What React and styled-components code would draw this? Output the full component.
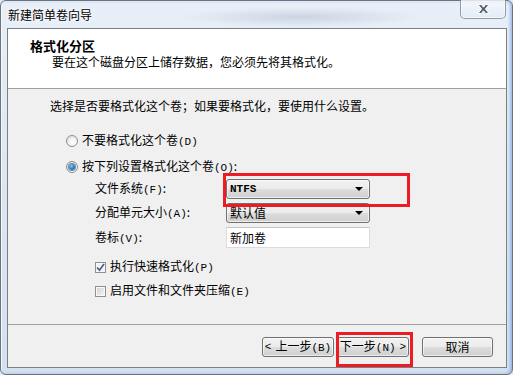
import React from "react";
import styled, { createGlobalStyle } from "styled-components";

const GlobalStyle = createGlobalStyle`
  html, body {
    margin: 0;
    padding: 0;
  }
  body {
    background: #dfe8f2;
    font-family: "Noto Sans CJK SC", "Liberation Sans", sans-serif;
    font-size: 12px;
    color: #000;
  }
`;

// Frame
const Window = styled.div`
  position: relative;
  box-sizing: border-box;
  width: 513px;
  height: 375px;
  padding: 0 5px 6px 6px;
  display: flex;
  flex-direction: column;
  border: 1px solid #6a737e;
  border-radius: 6px;
  background:
    radial-gradient(ellipse 120px 10px at 300px 16px, rgba(150, 165, 185, 0.35), transparent),
    radial-gradient(ellipse 90px 9px at 420px 40px, rgba(150, 165, 185, 0.25), transparent),
    linear-gradient(180deg, #e8eff8 0%, #dde7f2 45%, #d3e0ee 100%);
  box-shadow: inset -2px 0 3px rgba(70, 130, 220, 0.45), inset 1px 1px 0 rgba(255, 255, 255, 0.8);
`;

const TitleBar = styled.div`
  height: 27px;
  display: flex;
  justify-content: space-between;
  align-items: flex-start;
`;

const Caption = styled.div`
  margin: 6px 0 0 1px;
  line-height: 16px;
  text-shadow: 0 0 6px #fff, 0 0 3px #fff;
`;

const CloseButton = styled.div`
  box-sizing: border-box;
  width: 46px;
  height: 19px;
  margin: -1px 1px 0 0;
  display: flex;
  align-items: center;
  justify-content: center;
  border: 1px solid rgba(70, 80, 100, 0.55);
  border-top: none;
  border-radius: 0 0 5px 5px;
  background: linear-gradient(180deg, rgba(255, 255, 255, 0.55), rgba(220, 232, 245, 0.4));
  box-shadow: inset 0 0 0 1px rgba(255, 255, 255, 0.5);
`;

const Client = styled.div`
  flex: 1;
  display: flex;
  flex-direction: column;
  border: 1px solid #7c7f84;
  background: #f0f0f0;
`;

// Header
const Header = styled.div`
  flex: none;
  height: 60px;
  box-sizing: border-box;
  padding: 9px 0 0 22px;
  background: #fff;
  border-bottom: 1px solid #a0a0a0;
`;

const HeaderTitle = styled.div`
  font-size: 13px;
  font-weight: bold;
  line-height: 16px;
`;

const HeaderText = styled.div`
  padding-left: 22px;
  line-height: 16px;
`;

// Body
const Body = styled.div`
  height: 235px;
  flex: none;
  padding: 9px 0 0 42px;
  box-sizing: border-box;
  display: flex;
  flex-direction: column;
`;

const Line = styled.div`
  line-height: 16px;
  white-space: nowrap;
`;

const Key = styled.span`
  font-family: "Liberation Mono", "DejaVu Sans Mono", monospace;
  font-size: 11px;
`;

const OptionRow = styled.div`
  display: flex;
  align-items: center;
  gap: ${(p) => p.$gap || 4}px;
  height: 16px;
  line-height: 16px;
  margin-top: ${(p) => p.$top}px;
  margin-left: ${(p) => p.$indent}px;
  white-space: nowrap;
`;

const Radio = styled.span`
  box-sizing: border-box;
  width: 12px;
  height: 12px;
  border-radius: 50%;
  border: 1px solid #8e8f8f;
  background: radial-gradient(circle at 60% 65%, #ffffff 0%, #f4f4f4 40%, #d4d4d4 100%);
  display: flex;
  align-items: center;
  justify-content: center;
  &::after {
    content: "";
    display: ${(p) => (p.$checked ? "block" : "none")};
    width: 6px;
    height: 6px;
    border-radius: 50%;
    background: radial-gradient(circle at 40% 35%, #8fd1f3 0%, #2a8ad4 45%, #0e4f88 100%);
    box-shadow: 0 0 0 1px rgba(30, 70, 110, 0.6);
  }
`;

const Box = styled.span`
  box-sizing: border-box;
  width: 11px;
  height: 11px;
  border: 1px solid #8e8f8f;
  background: ${(p) =>
    p.$checked
      ? "#f4f4f4"
      : "linear-gradient(135deg, #cfcfcf 0%, #e8e8e8 60%, #f7f7f7 100%)"};
  box-shadow: inset 0 0 0 1px #f8f8f8;
  display: flex;
  align-items: center;
  justify-content: center;
`;

const Settings = styled.div`
  display: grid;
  grid-template-columns: 131px 144px;
  row-gap: 4px;
  margin: 4px 0 0 45px;
  align-items: center;
`;

const FieldLabel = styled.div`
  line-height: 16px;
  white-space: nowrap;
`;

const Combo = styled.div`
  box-sizing: border-box;
  height: 20px;
  display: flex;
  align-items: center;
  justify-content: space-between;
  padding: 0 6px 0 3px;
  border: 1px solid #707070;
  border-radius: 3px;
  background: linear-gradient(180deg, #f2f2f2 0%, #ebebeb 48%, #dddddd 52%, #cfcfcf 100%);
  box-shadow: inset 0 0 0 1px rgba(255, 255, 255, 0.6);
  line-height: 16px;
`;

const ComboValue = styled.span`
  font-family: ${(p) => (p.$mono ? '"Liberation Mono", "DejaVu Sans Mono", monospace' : "inherit")};
  font-size: ${(p) => (p.$mono ? "11px" : "12px")};
  font-weight: ${(p) => (p.$mono ? "bold" : "normal")};
`;

const Arrow = styled.span`
  width: 0;
  height: 0;
  border-left: 4px solid transparent;
  border-right: 4px solid transparent;
  border-top: 4px solid #000;
`;

const TextBox = styled.div`
  box-sizing: border-box;
  height: 21px;
  padding: 0 3px;
  display: flex;
  align-items: center;
  border: 1px solid #dcdcdc;
  border-top-color: #c6c6c6;
  background: #fff;
`;

// Footer
const Footer = styled.div`
  flex: 1;
  display: flex;
  justify-content: flex-end;
  align-items: flex-start;
  padding: 12px 13px 0 0;
  border-top: 1px solid #a0a0a0;
`;

const Button = styled.div`
  box-sizing: border-box;
  width: ${(p) => p.$w || 72}px;
  height: 20px;
  margin-left: ${(p) => p.$gap || 0}px;
  display: flex;
  align-items: center;
  justify-content: center;
  gap: 4px;
  border: 1px solid #707070;
  border-radius: 3px;
  background: linear-gradient(180deg, #f2f2f2 0%, #ebebeb 48%, #dddddd 52%, #cfcfcf 100%);
  box-shadow: inset 0 0 0 1px rgba(255, 255, 255, 0.6);
  line-height: 16px;
  white-space: nowrap;
`;

// red annotation frames drawn over the dialog
const Mark = styled.div`
  position: absolute;
  box-sizing: border-box;
  border: 3px solid #ed1c24;
  left: ${(p) => p.$x}px;
  top: ${(p) => p.$y}px;
  width: ${(p) => p.$w}px;
  height: ${(p) => p.$h}px;
  pointer-events: none;
`;

const CloseGlyph = () => (
  <svg width="15" height="12" viewBox="0 0 14 12">
    <path
      d="M1.5 1.5 H4.8 L7 4.2 L9.2 1.5 H12.5 L8.9 6 L12.5 10.5 H9.2 L7 7.8 L4.8 10.5 H1.5 L5.1 6 Z"
      fill="#5b5f66"
      stroke="#fff"
      strokeWidth="1"
      strokeLinejoin="round"
    />
  </svg>
);

const Tick = () => (
  <svg width="9" height="9" viewBox="0 0 9 9">
    <path d="M1 4.5 L3.5 7.2 L8 1" fill="none" stroke="#4a6392" strokeWidth="1.8" />
  </svg>
);

export default function App() {
  return (
    <>
      <GlobalStyle />
      <Window>
        <TitleBar>
          <Caption>新建简单卷向导</Caption>
          <CloseButton>
            <CloseGlyph />
          </CloseButton>
        </TitleBar>
        <Client>
          <Header>
            <HeaderTitle>格式化分区</HeaderTitle>
            <HeaderText>要在这个磁盘分区上储存数据，您必须先将其格式化。</HeaderText>
          </Header>
          <Body>
            <Line>选择是否要格式化这个卷；如果要格式化，要使用什么设置。</Line>
            <OptionRow $top={19} $indent={16}>
              <Radio />
              <span>
                不要格式化这个卷<Key>(D)</Key>
              </span>
            </OptionRow>
            <OptionRow $top={10} $indent={16}>
              <Radio $checked />
              <span>
                按下列设置格式化这个卷<Key>(O)</Key>:
              </span>
            </OptionRow>
            <Settings>
              <FieldLabel>
                文件系统<Key>(F)</Key>:
              </FieldLabel>
              <Combo>
                <ComboValue $mono>NTFS</ComboValue>
                <Arrow />
              </Combo>
              <FieldLabel>
                分配单元大小<Key>(A)</Key>:
              </FieldLabel>
              <Combo>
                <ComboValue>默认值</ComboValue>
                <Arrow />
              </Combo>
              <FieldLabel>
                卷标<Key>(V)</Key>:
              </FieldLabel>
              <TextBox>新加卷</TextBox>
            </Settings>
            <OptionRow $top={11} $indent={45} $gap={4}>
              <Box $checked>
                <Tick />
              </Box>
              <span>
                执行快速格式化<Key>(P)</Key>
              </span>
            </OptionRow>
            <OptionRow $top={8} $indent={45} $gap={4}>
              <Box />
              <span>
                启用文件和文件夹压缩<Key>(E)</Key>
              </span>
            </OptionRow>
          </Body>
          <Footer>
            <Button>
              <Key>&lt;</Key>
              <span>
                上一步<Key>(B)</Key>
              </span>
            </Button>
            <Button $gap={3}>
              <span>
                下一步<Key>(N)</Key>
              </span>
              <Key>&gt;</Key>
            </Button>
            <Button $gap={13} $w={71}>
              取消
            </Button>
          </Footer>
        </Client>
        <Mark $x={222} $y={172} $w={187} $h={34} />
        <Mark $x={335} $y={331} $w={77} $h={35} />
      </Window>
    </>
  );
}
